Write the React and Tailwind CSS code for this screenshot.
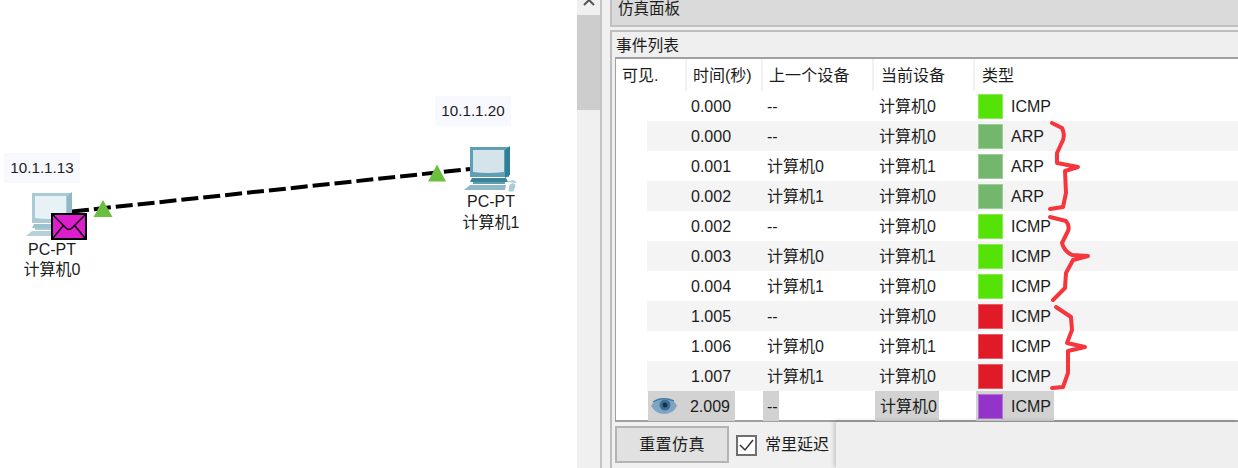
import React from "react";

const FONT = "[font-family:'Liberation_Sans','Noto_Sans_CJK_SC',sans-serif]";

const rows = [
  ["0.000", "--", "计算机0", "bg-[#55e307]", "ICMP"],
  ["0.000", "--", "计算机0", "bg-[#72b76b]", "ARP"],
  ["0.001", "计算机0", "计算机1", "bg-[#72b76b]", "ARP"],
  ["0.002", "计算机1", "计算机0", "bg-[#72b76b]", "ARP"],
  ["0.002", "--", "计算机0", "bg-[#55e307]", "ICMP"],
  ["0.003", "计算机0", "计算机1", "bg-[#55e307]", "ICMP"],
  ["0.004", "计算机1", "计算机0", "bg-[#55e307]", "ICMP"],
  ["1.005", "--", "计算机0", "bg-[#e01a26]", "ICMP"],
  ["1.006", "计算机0", "计算机1", "bg-[#e01a26]", "ICMP"],
  ["1.007", "计算机1", "计算机0", "bg-[#e01a26]", "ICMP"],
];

function Pc({ faded }) {
  const o = faded
    ? { frame: "#a9cbd6", side: "#8fb9c6", screen: "#e8f1f5", base: "#b5d2dc", dark: "#9cc2ce" }
    : { frame: "#5f9fb4", side: "#2f7f96", screen: "#d5e3ea", base: "#8fb9c7", dark: "#3d8398" };
  return (
    <svg width="54" height="48" viewBox="0 0 54 48">
      <path d="M7 3 H46 V33 H7 Z" fill={o.frame} />
      <path d="M42 6 L47 2 V31 L42 34 Z" fill={o.side} />
      <path d="M10 6 H41 V28 Q25 30 10 28 Z" fill={o.screen} />
      <path d="M9 34 H43 L45 38 H7 Z" fill={o.dark} />
      <path d="M10 38 H42 V40 H10 Z" fill={o.frame} />
      <path d="M7 41 H43 L42 46 H1 Z" fill={o.base} />
      {!faded && <path d="M45 38 Q52 35 53 39 M47 41 Q52 38 52 42 L50 47 H46 Z" fill="#a9cbd6" stroke="#a9cbd6" strokeWidth="1" />}
    </svg>
  );
}

function Eye() {
  return (
    <svg width="28" height="18" viewBox="0 0 28 18">
      <path d="M1 9 Q6 1 14 1 Q23 1 27 9 Q23 17 14 17 Q6 17 1 9 Z" fill="#7ea6c4" />
      <circle cx="15" cy="8" r="5.5" fill="#3e6f96" />
      <circle cx="15" cy="8" r="2.5" fill="#17324a" />
      <path d="M3 5 Q12 -1 24 4" fill="none" stroke="#4a7ca3" strokeWidth="1.5" />
    </svg>
  );
}

function Row({ r, striped }) {
  return (
    <div className={`ml-[31px] h-[30px] grid grid-cols-[39px_76px_111px_101px_1fr] items-center ${striped ? "bg-[#f4f4f4]" : "bg-white"}`}>
      <div />
      <div className="pl-[5px] pt-[2px]">{r[0]}</div>
      <div className="pl-[5px] pt-[2px]">{r[1]}</div>
      <div className="pl-[6px] pt-[2px]">{r[2]}</div>
      <div className="pl-[4px] flex items-center">
        <span className={`w-[25px] h-[25px] border border-white/30 ${r[3]}`} />
        <span className="ml-[8px] pt-[2px]">{r[4]}</span>
      </div>
    </div>
  );
}

function Head({ children, className = "" }) {
  return <div className={`h-[32px] pt-[2px] flex items-center border-r-2 border-[#f1f1f1] ${className}`}>{children}</div>;
}

export default function App() {
  return (
    <div className={`relative w-[1238px] h-[468px] overflow-hidden bg-white flex text-[16px] leading-none text-[#1c1c1c] ${FONT}`}>
      {/* topology canvas */}
      <div className="relative w-[577px] h-[468px] shrink-0 bg-white">
        <svg className="absolute left-0 top-0" width="577" height="468">
          <line x1="72" y1="211.5" x2="470" y2="169" stroke="#000" strokeWidth="4" strokeDasharray="17 5" />
          <path d="M103 200 L112.5 217 H93.5 Z" fill="#6abf3f" />
          <path d="M437 164.5 L446 181.5 H428 Z" fill="#6abf3f" />
        </svg>

        <div className="absolute left-[4px] top-[153px] w-[76px] h-[30px] bg-[#f8f8ff] flex items-center justify-center text-[15.2px]">10.1.1.13</div>
        <div className="absolute left-[435px] top-[96px] w-[76px] h-[30px] bg-[#f8f8ff] flex items-center justify-center text-[15.2px]">10.1.1.20</div>

        <div className="absolute left-[25px] top-[190px]"><Pc faded /></div>
        <div className="absolute left-[463px] top-[144px]"><Pc /></div>

        <div className="absolute left-[51px] top-[213px]">
          <svg width="36" height="27" viewBox="0 0 36 27">
            <rect x="1" y="1" width="34" height="25" fill="#dd1fcb" stroke="#000" strokeWidth="2" />
            <path d="M2 2 L15 15 Q18 18 21 15 L34 2 M2 25 L12 13 M34 25 L24 13" fill="none" stroke="#000" strokeWidth="1.4" />
          </svg>
        </div>

        <div className="absolute left-[2px] top-[241px] w-[100px] flex flex-col items-center gap-[2px]">
          <span className="h-[18px] flex items-center">PC-PT</span>
          <span className="h-[18px] flex items-center">计算机0</span>
        </div>
        <div className="absolute left-[441px] top-[193px] w-[100px] flex flex-col items-center gap-[3px]">
          <span className="h-[18px] flex items-center">PC-PT</span>
          <span className="h-[18px] flex items-center">计算机1</span>
        </div>
      </div>

      {/* scrollbar */}
      <div className="w-[25px] h-[468px] shrink-0 bg-[#f0f0f0] border-r-2 border-[#c4c4c4] flex flex-col">
        <div className="h-[15px] w-[24px] flex items-start justify-center">
          <svg width="14" height="8" viewBox="0 0 14 8"><path d="M2 5 L7 0 L12 5" fill="none" stroke="#555" strokeWidth="2" /></svg>
        </div>
        <div className="h-[95px] w-[23px] bg-[#cdcdcd]" />
      </div>

      {/* panel */}
      <div className="flex-1 min-w-0 bg-[#f0f0f0] pl-[8px]">
        <div className="h-[27px] bg-[#dadada] border-l-2 border-b-2 border-[#c0c0c0] pl-[6px] flex items-center pb-[8px]">
          <span className="text-[15.5px]">仿真面板</span>
        </div>
        <div className="mt-[3px] h-[438px] border-l-2 border-t-2 border-[#bdbdbd] flex flex-col">
          <div className="h-[25px] bg-[#efefef] pl-[4px] pt-[6px] text-[15.75px]">事件列表</div>
          <div className="ml-[3px] h-[365px] border-l border-t-2 border-b-2 border-[#a0a0a0] bg-white">
            <div className="h-[32px] grid grid-cols-[71px_76px_111px_101px_1fr]">
              <Head className="pl-[6px]">可见.</Head>
              <Head className="pl-[6px]">时间(秒)</Head>
              <Head className="pl-[6px] tracking-[0.1px]">上一个设备</Head>
              <Head className="pl-[7px]">当前设备</Head>
              <div className="h-[32px] pt-[2px] pl-[7px] flex items-center">类型</div>
            </div>
            {rows.map((r, i) => <Row key={i} r={r} striped={i % 2 === 1} />)}
            <div className="ml-[32px] h-[30px] grid grid-cols-[87px_28px_16px_96px_64px_37px_78px] items-center">
              <div className="h-full bg-[#d2d2d2] flex items-center justify-between pl-[2px] pr-[5px]"><Eye /><span className="pt-[2px]">2.009</span></div>
              <div />
              <div className="h-full bg-[#d2d2d2] flex items-center pl-[4px] pt-[2px]">--</div>
              <div />
              <div className="h-full bg-[#d2d2d2] flex items-center pl-[5px] pt-[2px]">计算机0</div>
              <div />
              <div className="h-full bg-[#d2d2d2] flex items-center pl-[2px]">
                <span className="w-[25px] h-[25px] bg-[#9333c9] border border-white/30" />
                <span className="ml-[8px] pt-[2px]">ICMP</span>
              </div>
            </div>
          </div>
          <div className="flex-1 flex">
            <div className="pl-[3px] pt-[4px] flex items-start">
              <button className="w-[114px] h-[37px] bg-[#e1e1e1] border-2 border-[#b4b4b4] flex items-center justify-center tracking-[0.4px]">重置仿真</button>
              <span className="ml-[7px] mt-[9px] w-[21px] h-[21px] bg-white border-2 border-[#6f6f6f] flex items-center justify-center">
                <svg width="15" height="13" viewBox="0 0 15 13"><path d="M1 6 L6 11 L14 1" fill="none" stroke="#333" strokeWidth="1.5" /></svg>
              </span>
              <span className="ml-[8px] mt-[11px]">常里延迟</span>
            </div>
            <div className="flex-1 ml-[7px] bg-[#efefef] shadow-[-2px_-1px_4px_rgba(0,0,0,0.18)]" />
          </div>
        </div>
      </div>

      {/* hand-drawn red braces over the table */}
      <svg className="absolute left-0 top-0 pointer-events-none" width="1238" height="468" fill="none" stroke="#f5363c" strokeWidth="4" strokeLinecap="round" strokeLinejoin="round">
        <path d="M1052 123 L1062 128 Q1065 134 1063 140 L1057 153 L1057 163 L1078 167 L1065 171 L1066 193 L1063 207 L1050 209" />
        <path d="M1050 217 L1066 221 Q1070 226 1068 231 L1062 243 Q1064 251 1072 255 L1088 256 L1073 260 L1066 273 L1065 288 L1053 300" />
        <path d="M1056 307 L1071 317 L1072 330 L1067 343 L1085 347 L1068 351 L1068 373 L1063 387 L1052 388" />
      </svg>
    </div>
  );
}
